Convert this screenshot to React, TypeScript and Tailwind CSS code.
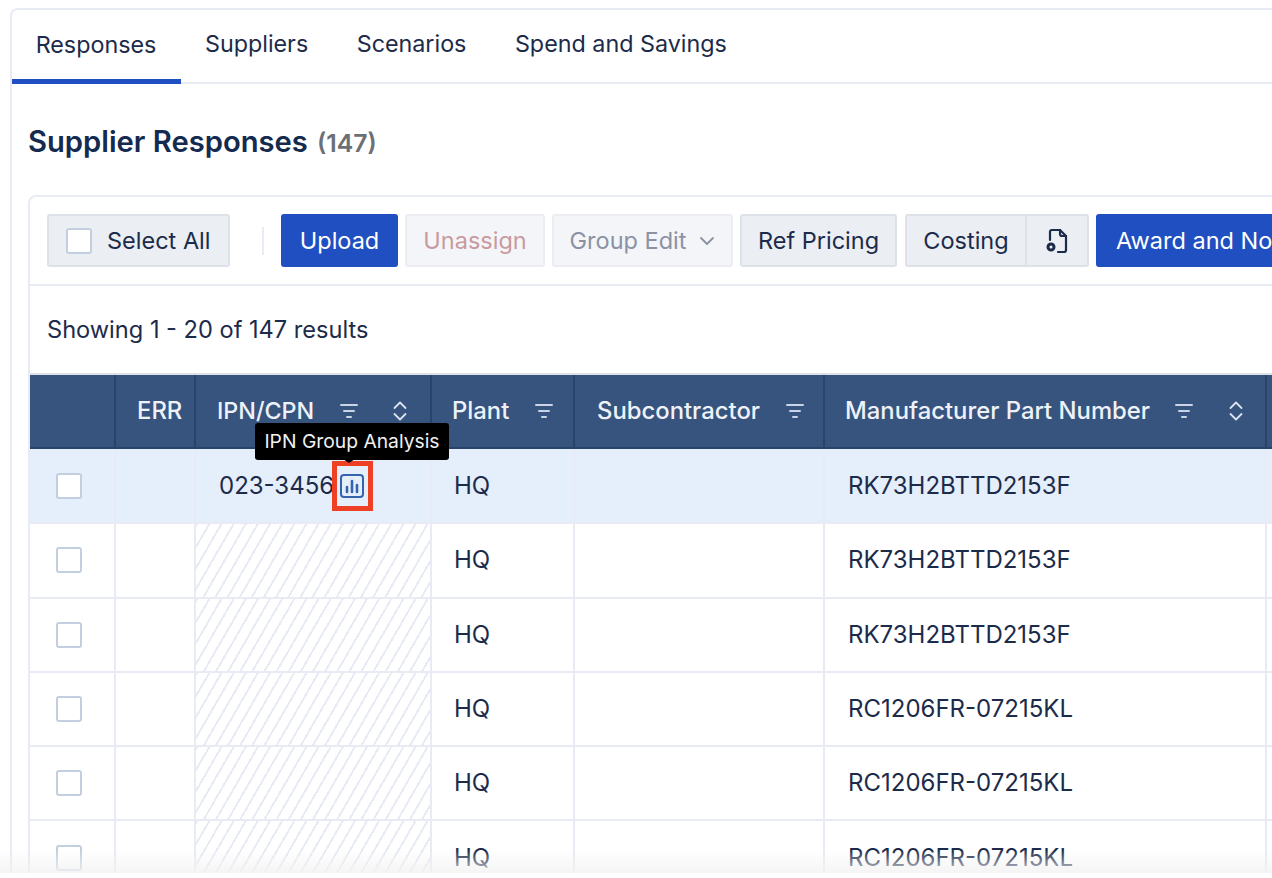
import { ReactNode } from "react";

const rows = [
  { part: "RK73H2BTTD2153F", ipn: "023-3456" },
  { part: "RK73H2BTTD2153F" },
  { part: "RK73H2BTTD2153F" },
  { part: "RC1206FR-07215KL" },
  { part: "RC1206FR-07215KL" },
  { part: "RC1206FR-07215KL" },
];

function FilterIcon() {
  return (
    <svg width="18" height="16" viewBox="0 0 18 16" fill="none" stroke="#c9d5e6" strokeWidth="2" strokeLinecap="round">
      <path d="M1 2h16M4 8h10M7 14h4" />
    </svg>
  );
}

function SortIcon() {
  return (
    <svg width="14" height="20" viewBox="0 0 14 20" fill="none" stroke="#dbe3ee" strokeWidth="1.8" strokeLinecap="round" strokeLinejoin="round">
      <path d="M1.5 7L7 1.5 12.5 7M1.5 13L7 18.5 12.5 13" />
    </svg>
  );
}

function HeaderCell({ className, children }: { className: string; children: ReactNode }) {
  return (
    <div className={`flex h-full shrink-0 items-center border-r-2 border-[#2a4469] font-medium text-[#eef2f8] ${className}`}>
      {children}
    </div>
  );
}

function Checkbox({ border = "border-[#c3cfde]" }: { border?: string }) {
  return <div className={`h-[26px] w-[26px] rounded-[3px] border-2 bg-white ${border}`} />;
}

function Row({ part, ipn, index }: { part: string; ipn?: string; index: number }) {
  return (
    <div className={`flex shrink-0 border-b-2 border-[#e8ebf3] ${index === 0 ? "h-[75.3px] bg-[#e5eefb]" : "h-[74.3px] bg-white"}`}>
      <div className="flex w-[86px] shrink-0 items-center border-r-2 border-[#e8ebf3] pl-[26px]">
        <Checkbox />
      </div>
      <div className="w-[80px] shrink-0 border-r-2 border-[#e8ebf3]" />
      {ipn ? (
        <div className="relative flex w-[236px] shrink-0 items-center border-r-2 border-[#e8ebf3] pl-[23px]">
          <span>{ipn}</span>
          <svg className="ml-[5px]" width="26" height="26" viewBox="0 0 26 26" fill="none" stroke="#3563ae" strokeLinecap="round">
            <rect x="2" y="2" width="22" height="22" rx="3" strokeWidth="2" />
            <path d="M8 14v5M13 8v11M18 12v7" strokeWidth="2.6" />
          </svg>
          <div className="absolute left-[136px] top-[12px] h-[50px] w-[41px] border-[5px] border-[#ee4024]" />
        </div>
      ) : (
        <div className="w-[236px] shrink-0 border-r-2 border-[#e8ebf3] bg-[repeating-linear-gradient(120deg,#e8ebf3_0,#e8ebf3_2px,transparent_2px,transparent_10.5px)]" />
      )}
      <div className="flex w-[143px] shrink-0 items-center border-r-2 border-[#e8ebf3] pl-[22px]">HQ</div>
      <div className="w-[250px] shrink-0 border-r-2 border-[#e8ebf3]" />
      <div className="flex w-[442px] shrink-0 items-center border-r-2 border-[#e8ebf3] pl-[23px]">{part}</div>
      <div className="w-[200px] shrink-0" />
    </div>
  );
}

export default function App() {
  return (
    <div className="relative h-[878px] w-[1272px] overflow-hidden bg-white pl-[10px] pt-[8px] font-['Inter',sans-serif] text-[24px] text-[#1c2b4a]">
      <div className="h-[900px] w-[1400px] rounded-tl-[8px] border-l-2 border-t-2 border-[#e8ebf3]">
        {/* Tabs */}
        <div className="flex h-[74px] border-b-2 border-[#e8ebf3] text-[23.3px]">
          <div className="flex h-[74px] w-[169px] items-center justify-center border-b-[5px] border-[#1f4fc0] pr-[1px] pt-[1px]">
            Responses
          </div>
          <div className="ml-[24px] flex items-center gap-[48.5px] pb-[3px]">
            <span>Suppliers</span>
            <span>Scenarios</span>
            <span>Spend and Savings</span>
          </div>
        </div>

        <div className="pl-[16px]">
          <h1 className="mt-[40px] flex h-[36px] items-center text-[29.2px] font-semibold leading-none text-[#142a4f]">
            Supplier Responses
            <span className="ml-[9px] mt-[2px] text-[24.8px] font-semibold text-[#6b6f76]">(147)</span>
          </h1>

          {/* Table card */}
          <div className="mt-[35px] rounded-tl-[8px] border-l-2 border-t-2 border-[#e8ebf3]">
            {/* Toolbar */}
            <div className="flex h-[89px] items-center border-b-2 border-[#e8ebf3] pl-[17px] text-[23.5px]">
              <div className="flex h-[53px] w-[183px] items-center rounded-[3px] border-2 border-[#dde1e8] bg-[#ebeef3] pl-[17px]">
                <Checkbox />
                <span className="ml-[15px]">Select All</span>
              </div>
              <div className="ml-[32px] h-[28px] w-[2px] bg-[#e8ebf3]" />
              <div className="ml-[17px] flex h-[53px] w-[117px] items-center justify-center rounded-[3px] bg-[#1f4fc0] text-white">
                Upload
              </div>
              <div className="ml-[7px] flex h-[53px] w-[140px] items-center justify-center rounded-[3px] border-2 border-[#ebedf2] bg-[#f4f5f9] text-[#c99a9e]">
                Unassign
              </div>
              <div className="ml-[7px] flex h-[53px] w-[181px] items-center justify-center gap-[13px] rounded-[3px] border-2 border-[#ebedf2] bg-[#f4f5f9] text-[#8a92a3]">
                Group Edit
                <svg width="16" height="10" viewBox="0 0 16 10" fill="none" stroke="#8a92a3" strokeWidth="1.8" strokeLinecap="round" strokeLinejoin="round">
                  <path d="M2 2l6 6 6-6" />
                </svg>
              </div>
              <div className="ml-[7px] flex h-[53px] w-[157px] items-center justify-center rounded-[3px] border-2 border-[#dde1e8] bg-[#ebeef3]">
                Ref Pricing
              </div>
              <div className="ml-[8px] flex h-[53px] w-[122px] items-center justify-center rounded-l-[3px] border-2 border-[#dde1e8] bg-[#ebeef3]">
                Costing
              </div>
              <div className="flex h-[53px] w-[62px] items-center justify-center rounded-r-[3px] border-y-2 border-r-2 border-[#dde1e8] bg-[#ebeef3]">
                <svg width="24" height="26" viewBox="0 0 24 26" fill="none" stroke="#1c2b4a" strokeWidth="2.2" strokeLinecap="round" strokeLinejoin="round">
                  <path d="M5 12V4a2 2 0 0 1 2-2h8l6 6v14a2 2 0 0 1-2 2h-6" />
                  <path d="M15 2v4a2 2 0 0 0 2 2h4" />
                  <circle cx="6" cy="19" r="3" strokeWidth="3" />
                </svg>
              </div>
              <div className="ml-[7px] flex h-[53px] w-[240px] shrink-0 items-center rounded-[3px] bg-[#1f4fc0] pl-[20px] text-white">
                Award and Notify
              </div>
            </div>

            <div className="flex h-[89px] items-center pb-[2px] pl-[17px] text-[23.6px]">Showing 1 - 20 of 147 results</div>

            {/* Table header */}
            <div className="relative flex h-[74px] border-b-2 border-[#2a4469] bg-[#37547f] text-[23.85px] shadow-[0_-2px_0_#dde1e8]">
              <HeaderCell className="w-[86px]"> </HeaderCell>
              <HeaderCell className="w-[80px] pl-[21px]">ERR</HeaderCell>
              <HeaderCell className="w-[236px] pl-[21px] text-[23.3px]">
                IPN/CPN
                <span className="ml-[26px]"><FilterIcon /></span>
                <span className="ml-[35px]"><SortIcon /></span>
              </HeaderCell>
              <HeaderCell className="w-[143px] pl-[20px]">
                Plant
                <span className="ml-[26px]"><FilterIcon /></span>
              </HeaderCell>
              <HeaderCell className="w-[250px] pl-[22px]">
                Subcontractor
                <span className="ml-[26px]"><FilterIcon /></span>
              </HeaderCell>
              <HeaderCell className="w-[442px] pl-[20px]">
                Manufacturer Part Number
                <span className="ml-[25px]"><FilterIcon /></span>
                <span className="ml-[36px]"><SortIcon /></span>
              </HeaderCell>

              {/* Tooltip */}
              <div className="absolute left-[225px] top-[48px] z-10 flex h-[37px] w-[194px] items-center justify-center rounded-[3px] bg-black text-[19.3px] text-[#f1f1f1]">
                IPN Group Analysis
                <div className="absolute -bottom-[3px] left-[88px] h-0 w-0 border-x-[6px] border-t-[4px] border-x-transparent border-t-black" />
              </div>
            </div>

            {rows.map((row, i) => (
              <Row key={i} index={i} part={row.part} ipn={row.ipn} />
            ))}
          </div>
        </div>
      </div>

      {/* bottom fade of the capture */}
      <div className="absolute bottom-0 left-0 h-[28px] w-full bg-gradient-to-b from-transparent to-[#f2f2f2]" />
      <div className="absolute bottom-0 left-0 h-[5px] w-full bg-white" />
    </div>
  );
}
